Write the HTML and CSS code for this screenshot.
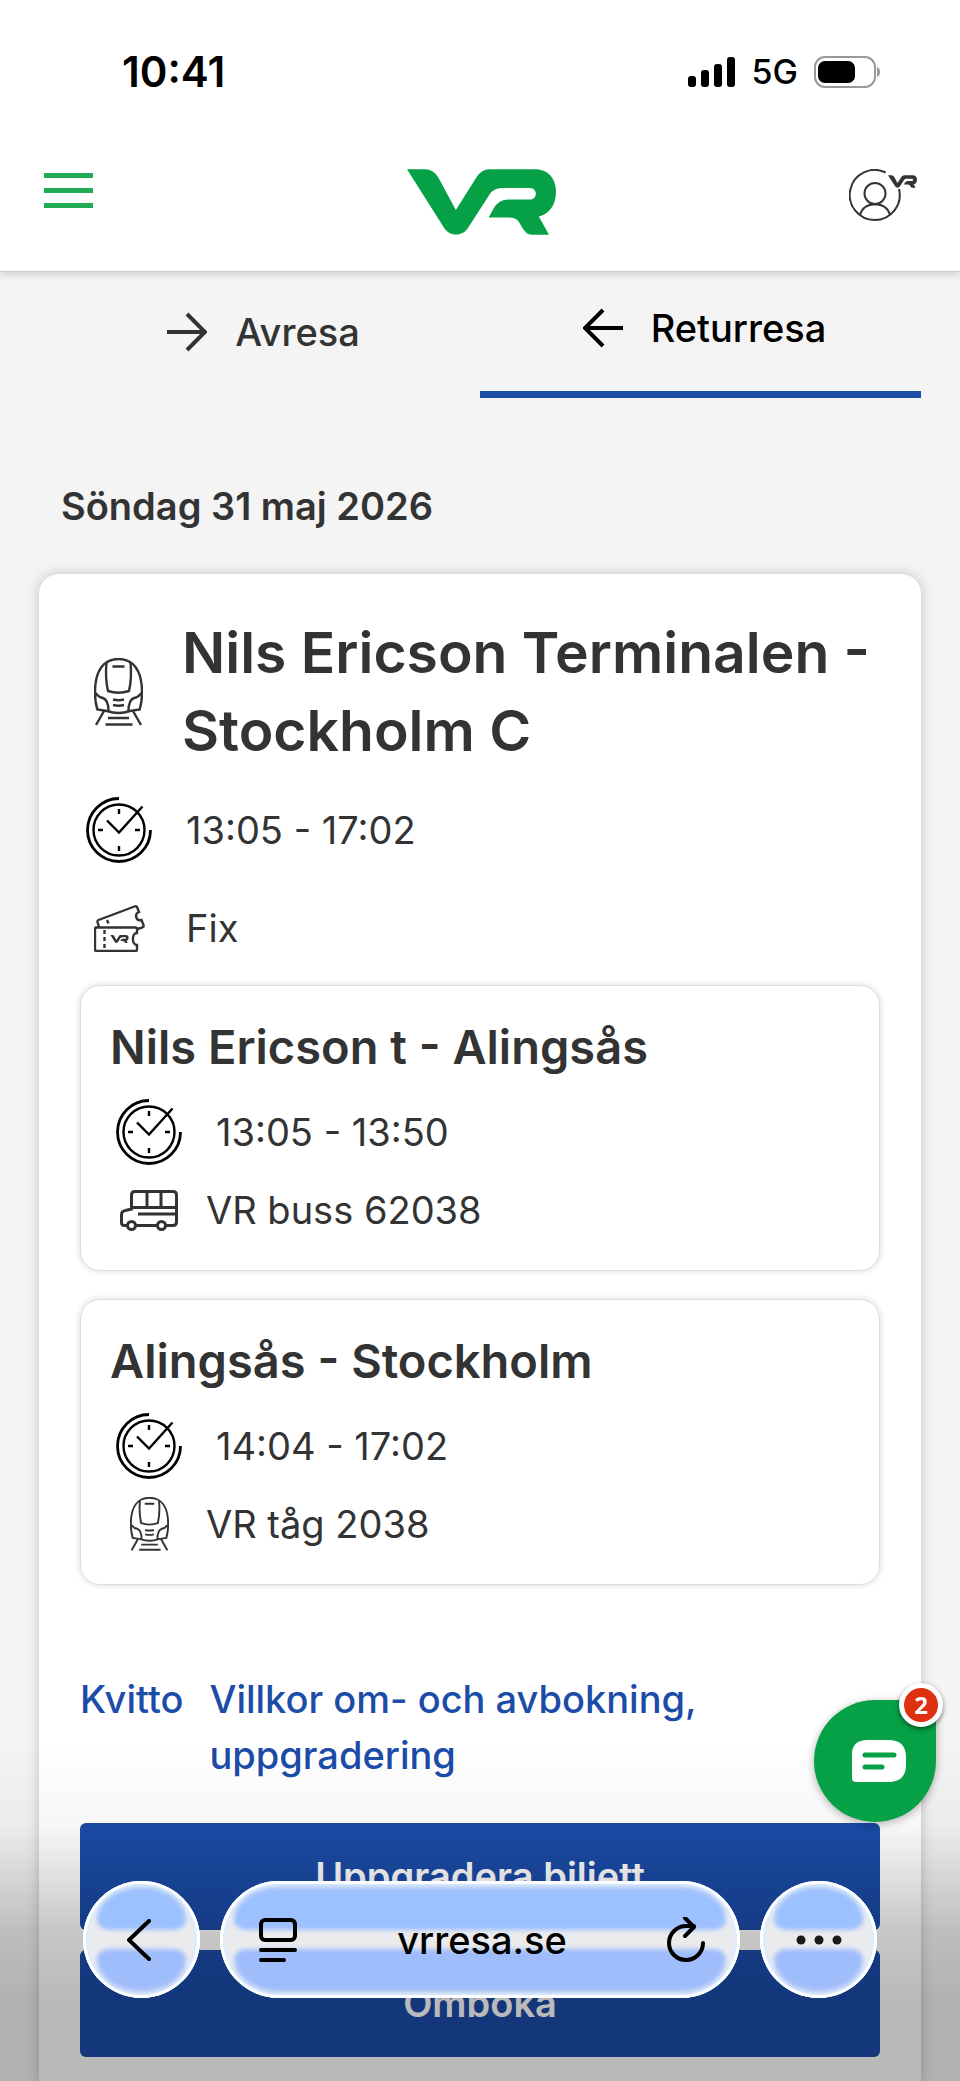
FILE: index.html
```html
<!DOCTYPE html>
<html lang="sv">
  <head>
    <meta charset="UTF-8" />
    <meta name="viewport" content="width=device-width, initial-scale=1.0" />
    <title>VR resa</title>
    <link rel="stylesheet" href="styles.css" />
  </head>
  <body>
    <!-- Shared icons -->
    <svg class="sprite" aria-hidden="true">
      <symbol id="vr" viewBox="0 0 148 65">
        <path d="M0 0H18Q26 0 31 8L48.500 40.500L69 8Q74 0 82 0H127C140 0 148 9 148 22C148 35 142 44 131 47L141 65H124Q118 65 114 57L111 52Q108 48 101 48H81L86 39Q91 30 101 30H122C130 30 130 18.500 122 18.500H94Q86 18.500 82 25L62 56C56 67.500 42 68 35.500 56Z" />
      </symbol>
      <symbol id="clock" viewBox="0 0 66 66">
        <path d="M33 1.500A31.500 31.500 0 1 0 64.500 33" stroke-width="2.800" />
        <circle cx="33" cy="33" r="25.500" />
        <path d="M21 23.500L33 35.500L56.500 9.500M33 12v5M33 49v5M12 33h5M49 33h5" />
      </symbol>
      <symbol id="train" viewBox="0 0 49 68">
        <path d="M3.300 51.500Q1 44 1 34C1 12 10 1 24.500 1C39 1 48 12 48 34Q48 44 45.700 51.500L36 53Q24.500 57 13 53Z" />
        <path d="M12.500 4.500Q11 20 14 33Q24.500 36.500 35 33Q38 20 36.500 4.500M18.500 8.500h12" />
        <path d="M1.500 35Q5 39.500 9 40Q14.500 42 14.500 53M47.500 35Q44 39.500 40 40Q34.500 42 34.500 53M19 41.500Q24.500 43 30 41.500M19 47Q24.500 48.500 30 47" />
        <path d="M10 53L2 67M39 53L47 67M14 60h21M11.500 66.500h27" />
      </symbol>
      <symbol id="ticket" viewBox="0 0 51 47">
        <path d="M43 28C37.500 28 37.500 40 43 40V44.500q0 1.500-1.500 1.500H2.500q-1.500 0-1.500-1.500V24q0-1.500 1.500-1.500H41.500q1.500 0 1.500 1.500Z" />
        <path d="M5 22L3.500 17q-.3-1.500 1-2L40.500 1.500q2-.8 2.600.8L45 7C40 9 42 16.500 47.500 15L49.500 20q.4 2-1 2.300L43.500 24M13 15l1.500 3.500" />
        <path d="M10.500 25v19" stroke-dasharray="4 3" />
        <svg x="16" y="30" width="19" height="8" fill="#333" stroke="none"><use href="#vr" /></svg>
      </symbol>
      <symbol id="bus" viewBox="0 0 58 41">
        <path d="M7 35.500H4.500q-3 0-3-3V25q0-4 4-4.500L11.500 19V5q0-3.500 3.500-3.500H53q3.500 0 3.500 3.500V32q0 3.500-3.500 3.500H46M16 35.500H37M11.500 17.500H56M27 1.500v16M41 1.500v16M18 24h38" />
        <circle cx="11.500" cy="35.500" r="4" />
        <circle cx="41.500" cy="35.500" r="4" />
      </symbol>
    </svg>

    <header>
      <div class="status">
        <span class="time">10:41</span>
        <div class="signal">
          <svg width="48" height="30" viewBox="0 0 48 30">
            <rect x="0" y="19" width="8" height="11" rx="3" />
            <rect x="13" y="13" width="8" height="17" rx="3" />
            <rect x="26" y="7" width="8" height="23" rx="3" />
            <rect x="39" y="0" width="8" height="30" rx="3" />
          </svg>
          <span class="network">5G</span>
          <svg width="66" height="32" viewBox="0 0 66 32">
            <rect x="1" y="1" width="60" height="30" rx="10" fill="none" stroke="#999" stroke-width="2" />
            <rect x="4" y="5" width="37" height="22" rx="7" />
            <path d="M63 11q3 1 3 5t-3 5z" fill="#999" />
          </svg>
        </div>
      </div>
      <nav>
        <button class="menu" aria-label="Meny"><span></span><span></span><span></span></button>
        <a class="logo" href="#" aria-label="VR"><svg width="149" height="66"><use href="#vr" /></svg></a>
        <a class="account" href="#" aria-label="Mitt konto">
          <svg width="69" height="54" viewBox="0 0 69 54">
            <path class="line" d="M36.700 3.500A25 25 0 1 0 50 20M11 46Q14 35.500 26 35.300Q38 35.500 41 46" />
            <circle class="line" cx="26" cy="24.500" r="10.500" />
            <svg x="39" y="6" width="29" height="13"><use href="#vr" /></svg>
          </svg>
        </a>
      </nav>
    </header>

    <main>
      <div class="tabs">
        <button class="tab">
          <svg width="40" height="40" viewBox="0 0 40 40"><path d="M0 20H38M20 2L38 20L20 38" /></svg>
          Avresa
        </button>
        <button class="tab active">
          <svg width="40" height="40" viewBox="0 0 40 40"><path d="M40 20H2M20 2L2 20L20 38" /></svg>
          Returresa
        </button>
      </div>

      <h3 class="date">Söndag 31 maj 2026</h3>

      <section class="card">
        <div class="row trip">
          <span class="icon"><svg width="49" height="68"><use href="#train" /></svg></span>
          <h1>Nils Ericson Terminalen - Stockholm C</h1>
        </div>
        <div class="row">
          <span class="icon clock"><svg width="66" height="66"><use href="#clock" /></svg></span>
          <span>13:05 - 17:02</span>
        </div>
        <div class="row">
          <span class="icon"><svg width="51" height="47"><use href="#ticket" /></svg></span>
          <span>Fix</span>
        </div>

        <div class="leg">
          <h2>Nils Ericson t - Alingsås</h2>
          <div class="row">
            <span class="icon clock"><svg width="66" height="66"><use href="#clock" /></svg></span>
            <span>13:05 - 13:50</span>
          </div>
          <div class="row vehicle">
            <span class="icon bus"><svg width="58" height="41"><use href="#bus" /></svg></span>
            <span>VR buss 62038</span>
          </div>
        </div>

        <div class="leg">
          <h2>Alingsås - Stockholm</h2>
          <div class="row">
            <span class="icon clock"><svg width="66" height="66"><use href="#clock" /></svg></span>
            <span>14:04 - 17:02</span>
          </div>
          <div class="row vehicle">
            <span class="icon"><svg width="39" height="54"><use href="#train" /></svg></span>
            <span>VR tåg 2038</span>
          </div>
        </div>

        <div class="links">
          <a href="#">Kvitto</a>
          <a href="#">Villkor om- och avbokning, uppgradering</a>
        </div>

        <div class="actions">
          <button>Uppgradera biljett</button>
          <button>Omboka</button>
        </div>
      </section>
    </main>

    <div class="shade"></div>

    <button class="chat" aria-label="Chatt">
      <svg width="54" height="42" viewBox="0 0 54 42">
        <path d="M14 0H38Q54 1 54 17V25Q54 41 38 42H4Q0 42 0 38V14Q0 1 14 0Z" fill="#fff" />
        <path d="M13 15H42M13 27H30" stroke="#06a146" stroke-width="5" stroke-linecap="round" />
      </svg>
      <span class="badge">2</span>
    </button>

    <!-- Browser toolbar -->
    <div class="toolbar">
      <button class="glass round" aria-label="Tillbaka">
        <svg class="back" width="24" height="42" viewBox="0 0 24 42"><path d="M22 2L2 21L22 40" /></svg>
      </button>
      <div class="glass address">
        <button aria-label="Läsläge">
          <svg width="38" height="44" viewBox="0 0 38 44"><rect x="2" y="2" width="34" height="20" rx="4" /><path d="M2 32H36M2 42H25" /></svg>
        </button>
        <button class="url">vrresa.se</button>
        <button aria-label="Ladda om">
          <svg width="38" height="46" viewBox="0 0 38 46"><path d="M36 26A17 17 0 1 1 19 9H27M18 1L27 10L18 19" /></svg>
        </button>
      </div>
      <button class="glass round" aria-label="Mer">
        <svg class="dots" width="46" height="10" viewBox="0 0 46 10"><circle cx="5" cy="5" r="4.500" /><circle cx="23" cy="5" r="4.500" /><circle cx="41" cy="5" r="4.500" /></svg>
      </button>
    </div>
  </body>
</html>
```

FILE: styles.css
```css
* {
  box-sizing: border-box;
}

body {
  font-family: "Inter", "Liberation Sans", sans-serif;
  font-size: 38px;
  line-height: 50px;
  margin: 0;
  height: 100vh;
  overflow: hidden;
  background-color: #f4f4f4;
  color: #333;
}

h1,
h2,
h3 {
  margin: 0;
  font-weight: 600;
}

a {
  color: #1b4ca8;
  text-decoration: none;
}

button {
  font: inherit;
  color: inherit;
  border: none;
  padding: 0;
  background: none;
  cursor: pointer;
}

svg {
  display: block;
}

.sprite {
  position: absolute;
  width: 0;
  height: 0;
}

/* Header */
header {
  position: relative;
  background-color: #fff;
  border-bottom: 1px solid #ccc;
  box-shadow: 0 2px 8px rgba(0, 0, 0, 0.16);
}

.status {
  display: flex;
  justify-content: space-between;
  align-items: center;
  padding: 47px 80px 38px 122px;
  color: #000;
}

.time {
  font-size: 42px;
  font-weight: 600;
}

.signal {
  display: flex;
  align-items: center;
  gap: 16px;
}

.network {
  font-size: 34px;
  font-weight: 500;
}

nav {
  display: grid;
  grid-template-columns: 1fr auto 1fr;
  align-items: start;
  padding: 34px 42px 36px 44px;
}

.menu {
  display: flex;
  flex-direction: column;
  gap: 10px;
  width: 49px;
  padding-top: 4px;
}

.menu span {
  height: 5px;
  width: 100%;
  background-color: #22ab55;
}

.logo {
  fill: #06a146;
}

.account {
  justify-self: end;
  fill: #333;
}

.account .line {
  fill: none;
  stroke: #333;
  stroke-width: 2;
}

/* Tabs */
main {
  padding: 0 39px;
}

.tabs {
  display: grid;
  grid-template-columns: 1fr 1fr;
}

.tab {
  display: flex;
  align-items: center;
  justify-content: center;
  gap: 28px;
  padding: 31px 0 38px 8px;
  font-weight: 500;
}

.tab svg {
  fill: none;
  stroke: currentColor;
  stroke-width: 4;
}

.active {
  color: #000;
  border-bottom: 7px solid #1b4ca8;
}

.date {
  font-size: 38px;
  padding: 83px 22px 43px;
}

/* Trip card */
.card {
  background-color: #fff;
  border-radius: 20px;
  padding: 40px 41px;
  box-shadow: 0 0 14px rgba(0, 0, 0, 0.2);
}

.row {
  display: flex;
  align-items: center;
  gap: 28px;
  min-height: 66px;
  margin-bottom: 32px;
}

.trip {
  gap: 26px;
  margin-bottom: 27px;
}

.trip h1 {
  font-size: 57px;
  line-height: 78px;
}

.icon {
  display: flex;
  justify-content: center;
  flex: 0 0 78px;
  fill: none;
  stroke: #333;
  stroke-width: 2.4;
}

.trip .icon {
  flex-basis: 76px;
}

.clock {
  stroke: #000;
}

.bus {
  stroke-width: 3;
}

.leg {
  border: 1px solid #ddd;
  border-radius: 20px;
  padding: 30px 29px 21px;
  margin-bottom: 28px;
  box-shadow: 0 0 6px rgba(0, 0, 0, 0.16);
}

.row + .leg {
  margin-top: -8px;
}

.leg h2 {
  font-size: 47px;
  line-height: 62px;
  margin-bottom: 15px;
}

.leg .row {
  min-height: 78px;
  margin-bottom: 0;
}

.leg .vehicle {
  gap: 18px;
}

.links {
  display: flex;
  gap: 26px;
  margin: 86px 0 40px;
  line-height: 56px;
  font-weight: 500;
}

.links a:last-child {
  max-width: 520px;
}

.actions {
  display: flex;
  flex-direction: column;
  gap: 20px;
}

.actions button {
  padding: 28px 0 29px;
  border-radius: 6px;
  background-color: #1b4ca8;
  color: #fff;
  font-weight: 600;
}

/* Darkening behind the browser toolbar */
.shade {
  position: fixed;
  left: 0;
  right: 0;
  bottom: 0;
  height: 340px;
  background: linear-gradient(transparent, rgba(0, 0, 0, 0.03) 25%, rgba(0, 0, 0, 0.22) 56%, rgba(0, 0, 0, 0.27) 75%);
}

.chat {
  position: fixed;
  right: 24px;
  bottom: 259px;
  display: flex;
  align-items: center;
  justify-content: center;
  width: 122px;
  height: 122px;
  padding-left: 8px;
  border-radius: 50% 0 50% 50%;
  background-color: #06a146;
  box-shadow: 0 2px 8px rgba(0, 0, 0, 0.3);
}

.badge {
  position: absolute;
  top: -17px;
  right: -7px;
  width: 44px;
  height: 44px;
  border: 5px solid #fff;
  border-radius: 50%;
  background-color: #df3010;
  box-shadow: 0 2px 5px rgba(0, 0, 0, 0.5);
  color: #fff;
  font: bold 24px/34px "Open Sans", sans-serif;
}

/* Browser toolbar */
.toolbar {
  position: fixed;
  left: 83px;
  right: 83px;
  bottom: 83px;
  display: flex;
  gap: 20px;
  color: #000;
}

.glass {
  position: relative;
  display: flex;
  align-items: center;
  height: 117px;
  border-radius: 59px;
  background-color: #ebebee;
  box-shadow: inset 0 0 0 3px #fff, inset 0 0 3px 5px #d8ecff;
}

.glass::before,
.glass::after {
  content: "";
  position: absolute;
  left: 14px;
  right: 14px;
  height: 43px;
  background-color: #9dc0ff;
  filter: blur(2px);
}

.glass::before {
  top: 6px;
  border-radius: 45px 45px 12px 12px / 33px 33px 10px 10px;
}

.glass::after {
  bottom: 6px;
  border-radius: 12px 12px 45px 45px / 10px 10px 33px 33px;
  background-color: #a0bdfb;
}

.glass svg,
.glass button {
  position: relative;
  z-index: 1;
}

.glass svg {
  fill: none;
  stroke: #000;
  stroke-width: 4;
  stroke-linecap: round;
  stroke-linejoin: round;
}

.round {
  justify-content: center;
  flex: 0 0 117px;
}

.back {
  margin-right: 6px;
}

.glass .dots {
  fill: #1a1a1a;
  stroke: none;
}

.address {
  flex: 1;
  justify-content: space-between;
  padding: 0 35px 0 39px;
}

.url {
  font-weight: 500;
}
```
